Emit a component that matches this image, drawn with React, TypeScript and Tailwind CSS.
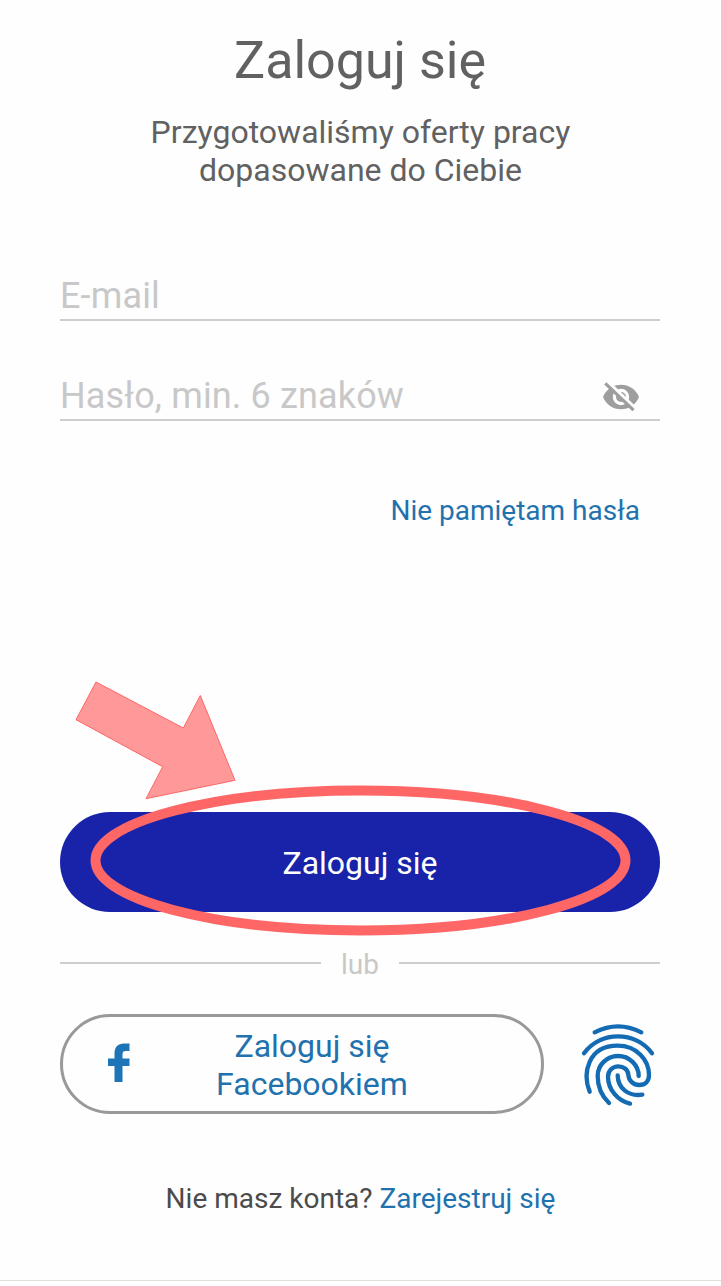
import React from "react";

function HiddenEyeIcon() {
  return (
    <svg viewBox="0 0 40 40" className="mt-px h-[40px] w-[40px] shrink-0" fill="none">
      <path
        d="M2 20C5 12.500 12 7.700 20 7.700S35 12.500 38 20C35 27.500 28 32.300 20 32.300S5 27.500 2 20Z"
        fill="#9e9e9e"
      />
      <circle cx="20" cy="20" r="6.600" stroke="#fefefe" strokeWidth="3.200" />
      <path d="M6.500 4.500L35 32" stroke="#fefefe" strokeWidth="3.200" />
      <path d="M4.300 6.300L32.500 33.200" stroke="#9e9e9e" strokeWidth="3.200" />
    </svg>
  );
}

function FacebookIcon() {
  return (
    <svg viewBox="0 0 22 39" className="mb-[3px] h-[39px] w-[22px] shrink-0" fill="#1d74b6">
      <path d="M6.500 39V23H0V15.500H6.500V10.500C6.500 4 10 0.500 16 0.500H21.500V8H17.500C15.500 8 14.500 9 14.500 11V15.500H21.500V23H14.500V39Z" />
    </svg>
  );
}

function FingerprintIcon() {
  return (
    <svg
      viewBox="0 0 300 330"
      className="mt-[2px] h-[110px] w-[100px] shrink-0"
      fill="none"
      stroke="#136bb3"
      strokeWidth="13"
      strokeLinecap="round"
      strokeLinejoin="round"
    >
      <path d="M74 67Q144 31 214 67" />
      <path d="M42 130C90 62 198 62 246 130" />
      <path d="M59 245C37 190 53 107 143 107C200 107 237 150 237 195C237 214 225 225 208 225C190 225 176 212 175 194C174 178 160 169 145 169C128 169 114 182 114 200C114 240 145 273 180 281" />
      <path d="M117 279C95 258 83 235 83 198C83 165 110 138 144 138C178 138 206 165 206 198" />
      <path d="M143 196C144 235 175 260 217 254" />
    </svg>
  );
}

function Highlight() {
  return (
    <svg
      viewBox="60 670 600 280"
      className="pointer-events-none absolute left-0 top-[-142px] h-[280px] w-[600px]"
    >
      <polygon
        points="96,682 183.300,728 200.300,695.500 235,780.300 146,798.700 162.700,766.700 76,719.700"
        fill="#ff9999"
        stroke="#ff6666"
        strokeWidth="1"
      />
      <ellipse cx="360.500" cy="860.500" rx="265" ry="70" fill="none" stroke="#ff6666" strokeWidth="10" />
    </svg>
  );
}

export default function App() {
  return (
    <main className="flex h-[1286px] w-[721px] flex-col bg-[#fefefe] font-['Roboto',sans-serif] text-[#616161]">
      <div className="flex h-[1281px] flex-col border-b border-[#dedede] pl-[60px] pr-[61px]">
        <h1 className="mt-[31px] text-center text-[52px] leading-[60px]">Zaloguj się</h1>
        <p className="mt-[22px] pl-px text-center text-[32px] leading-[38px]">
          Przygotowaliśmy oferty pracy
          <br />
          dopasowane do Ciebie
        </p>

        <div className="mt-[82px] flex h-[50px] items-center border-b-2 border-[#cecece] pt-[2px] text-[36px] leading-[42px] tracking-[0.15px] text-[#c8c8c8]">
          E-mail
        </div>
        <div className="mt-[50px] flex h-[50px] items-center justify-between border-b-2 border-[#cecece] pr-[19px] pt-[2px] text-[36px] leading-[42px] tracking-[0.15px] text-[#c8c8c8]">
          <span>Hasło, min. 6 znaków</span>
          <HiddenEyeIcon />
        </div>
        <a className="mt-[74px] self-end pr-5 text-[28px] leading-[32px] text-[#1f72ae]">Nie pamiętam hasła</a>

        <div className="relative mt-[285px]">
          <button className="h-[100px] w-[600px] rounded-full bg-[#1823aa] pt-[2px] text-[32px] text-white">
            Zaloguj się
          </button>
          <Highlight />
        </div>

        <div className="mt-[35px] flex h-[32px] items-center gap-5 text-[28px] leading-[32px] text-[#c8c8c8]">
          <span className="h-[2px] flex-1 bg-[#cecece]" />
          <span className="pt-[3px]">lub</span>
          <span className="h-[2px] flex-1 bg-[#cecece]" />
        </div>

        <div className="mt-[30px] flex h-[110px] items-center">
          <button className="flex h-[100px] w-[484px] items-center rounded-full border-[3px] border-[#999999] pl-[45px] text-[32px] leading-[38px] text-[#1f72ae]">
            <FacebookIcon />
            <span className="ml-[67px] w-[230px] pt-[2px] text-center">
              Zaloguj się
              <br />
              Facebookiem
            </span>
          </button>
          <span className="ml-[26px] w-[90px]">
            <FingerprintIcon />
          </span>
        </div>

        <p className="mt-[64px] pl-px text-center text-[28px] leading-[32px] text-[#4b4b4b]">
          Nie masz konta? <a className="text-[#1f72ae]">Zarejestruj się</a>
        </p>
      </div>
    </main>
  );
}
